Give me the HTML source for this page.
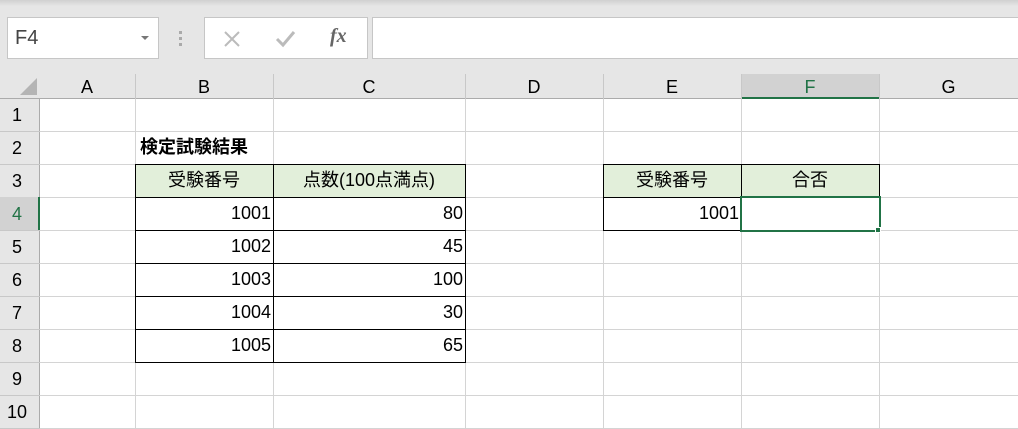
<!DOCTYPE html>
<html><head><meta charset="utf-8"><style>
body{margin:0;width:1018px;height:429px;overflow:hidden;background:#fff;position:relative;font-family:"Liberation Sans","Noto Sans CJK JP",sans-serif}
div{position:absolute;box-sizing:border-box}
.t{font-size:18px;line-height:33px;color:#000;white-space:nowrap}
.h{font-size:18px;color:#000;text-align:center;line-height:24px}
</style></head><body>
<div style="left:0;top:0;width:1018px;height:74px;background:#e6e6e6"></div>
<div style="left:0;top:0;width:1018px;height:6px;background:linear-gradient(#d0d0d0,#e6e6e6)"></div>
<div style="left:7px;top:17px;width:152px;height:42px;background:#fff;border:1px solid #c6c6c6"></div>
<div class="t" style="left:15px;top:22px;font-size:20px;color:#444">F4</div>
<div style="left:141px;top:36px;width:0;height:0;border-left:4px solid transparent;border-right:4px solid transparent;border-top:4px solid #777"></div>
<div style="left:179px;top:31px;width:3px;height:3px;background:#aaa;box-shadow:0 6px 0 #aaa,0 12px 0 #aaa"></div>
<div style="left:204px;top:17px;width:164px;height:42px;background:#fff;border:1px solid #c6c6c6"></div>
<svg style="position:absolute;left:222px;top:29px" width="20" height="20"><path d="M3 3L17 17M17 3L3 17" stroke="#bbb" stroke-width="2"/></svg>
<svg style="position:absolute;left:275px;top:29px" width="22" height="20"><path d="M2 10L8 16L19 3" stroke="#bbb" stroke-width="3" fill="none"/></svg>
<div style="left:330px;top:25px;font-family:'Liberation Serif',serif;font-style:italic;font-weight:bold;font-size:20px;color:#666">fx</div>
<div style="left:372px;top:17px;width:646px;height:42px;background:#fff;border:1px solid #c6c6c6;border-right:none"></div>
<div style="left:0;top:74px;width:1018px;height:25px;background:#e6e6e6;border-bottom:1px solid #ababab"></div>
<div style="left:0;top:99px;width:40px;height:330px;background:#e6e6e6;border-right:1px solid #ababab"></div>
<svg style="position:absolute;left:20px;top:78px" width="18" height="18"><path d="M17 0L17 17L0 17Z" fill="#b4b4b4"/></svg>
<div style="left:741px;top:74px;width:138px;height:25px;background:#d2d2d2;border-bottom:2px solid #217346"></div>
<div id="cols"></div>
<script>
var xs=[39,135,273,465,603,741,879,1018],L="ABCDEFG",h="";
for(var i=0;i<7;i++){h+='<div class="h" style="left:'+xs[i]+'px;top:75px;width:'+(xs[i+1]-xs[i])+'px;'+(i==5?'color:#217346':'')+'">'+L[i]+'</div>';
h+='<div style="left:'+xs[i+1]+'px;top:74px;width:1px;height:25px;background:#c8c8c8"></div>';
h+='<div style="left:'+xs[i+1]+'px;top:99px;width:1px;height:330px;background:#d4d4d4"></div>';}
for(var r=0;r<10;r++){var y=98+33*r;
h+='<div style="left:40px;top:'+(y+33)+'px;width:978px;height:1px;background:#d4d4d4"></div>';
h+='<div style="left:0;top:'+(y+33)+'px;width:40px;height:1px;background:#c8c8c8"></div>';
h+='<div class="h" style="left:0;top:'+(y+5)+'px;width:34px;'+(r==3?'color:#217346':'')+'">'+(r+1)+'</div>';}
document.getElementById('cols').outerHTML=h;
</script>
<div style="left:0;top:197px;width:40px;height:33px;background:#d2d2d2;border-right:2px solid #217346"></div>
<div class="h" style="left:0;top:202px;width:34px;color:#217346">4</div>
<div class="t" style="left:140px;top:131px;font-weight:bold">検定試験結果</div>
<div style="left:135px;top:164px;width:331px;height:33px;background:#e2efda"></div>
<div style="left:135px;top:164px;width:331px;height:199px;border:1px solid #000"></div>
<div id="tb"></div>
<script>
var h2="",d=[[1001,80],[1002,45],[1003,100],[1004,30],[1005,65]];
for(var r=1;r<6;r++)h2+='<div style="left:135px;top:'+(164+33*r)+'px;width:331px;height:1px;background:#000"></div>';
h2+='<div style="left:273px;top:164px;width:1px;height:199px;background:#000"></div>';
for(var r=0;r<5;r++){var y=197+33*r;
h2+='<div class="t" style="left:135px;top:'+y+'px;width:136px;text-align:right">'+d[r][0]+'</div>';
h2+='<div class="t" style="left:273px;top:'+y+'px;width:190px;text-align:right">'+d[r][1]+'</div>';}
document.getElementById('tb').outerHTML=h2;
</script>
<div class="t" style="left:135px;top:164px;width:138px;text-align:center">受験番号</div>
<div class="t" style="left:273px;top:164px;width:192px;text-align:center">点数(100点満点)</div>
<div style="left:603px;top:164px;width:277px;height:33px;background:#e2efda"></div>
<div style="left:603px;top:164px;width:277px;height:67px;border:1px solid #000"></div>
<div style="left:603px;top:197px;width:277px;height:1px;background:#000"></div>
<div style="left:741px;top:164px;width:1px;height:67px;background:#000"></div>
<div class="t" style="left:603px;top:164px;width:138px;text-align:center">受験番号</div>
<div class="t" style="left:741px;top:164px;width:138px;text-align:center">合否</div>
<div class="t" style="left:603px;top:197px;width:136px;text-align:right">1001</div>
<div style="left:740px;top:196px;width:141px;height:36px;border:2px solid #217346;background:#fff"></div>
<div style="left:875px;top:227px;width:6px;height:6px;background:#217346;border:1px solid #fff"></div>
</body></html>
